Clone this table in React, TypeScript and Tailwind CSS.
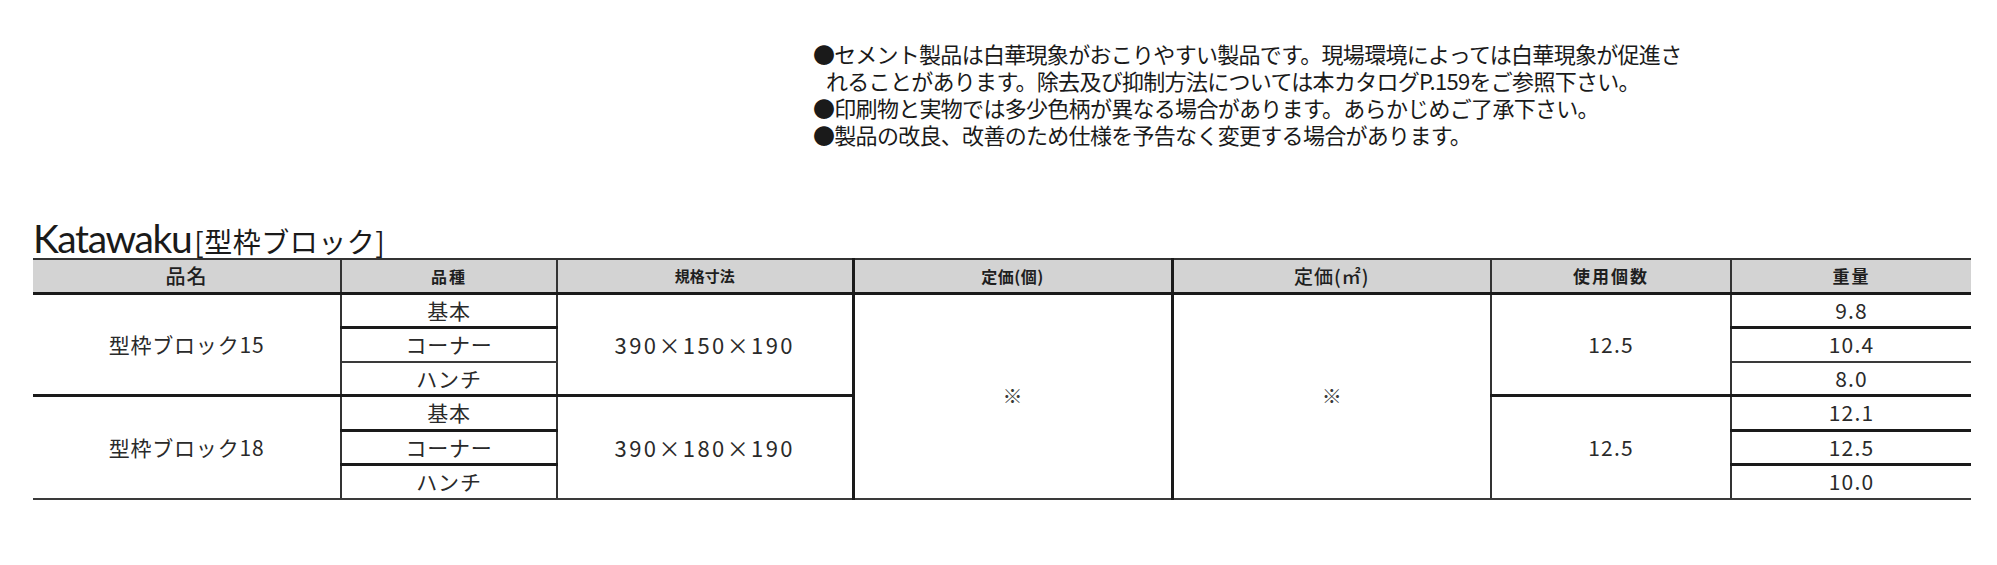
import React from "react";

const thinR = "border-r-2 border-r-[#333]";
const thickR = "border-r-[3px] border-r-[#1a1a1a]";
const thinB = "border-b-2 border-b-[#3a3a3a]";
const thickB = "border-b-[3px] border-b-[#1a1a1a]";
const cell = "p-0 text-center align-middle";
const bodyTxt = "text-[21px] tracking-[0.8px] text-[#2a2a2a]";
const numTxt = "text-[21px] tracking-[1.2px] text-[#2a2a2a]";

function Group({
  name,
  size,
  weights,
  first,
}: {
  name: string;
  size: string;
  weights: string[];
  first: boolean;
}) {
  const groupB = first ? thickB : thinB;
  const kinds = ["基本", "コーナー", "ハンチ"];
  const rowB = first ? [thickB, thinB, thickB] : [thickB, thickB, thinB];
  return (
    <>
      <tr className="h-[34px]">
        <td rowSpan={3} className={`${cell} ${thinR} ${groupB} ${bodyTxt}`}>
          {name}
        </td>
        <td className={`${cell} ${thinR} ${rowB[0]} ${bodyTxt}`}>{kinds[0]}</td>
        <td rowSpan={3} className={`${cell} ${thickR} ${groupB}`}>
          <span className="text-[22px] tracking-[2.4px] text-[#2a2a2a]">{size}</span>
        </td>
        {first && (
          <>
            <td rowSpan={6} className={`${cell} ${thickR} ${thinB} text-[20px] text-[#3a3a3a]`}>
              ※
            </td>
            <td rowSpan={6} className={`${cell} ${thinR} ${thinB} text-[20px] text-[#3a3a3a]`}>
              ※
            </td>
          </>
        )}
        <td rowSpan={3} className={`${cell} ${thinR} ${groupB} ${numTxt}`}>
          12.5
        </td>
        <td className={`${cell} ${rowB[0]} ${numTxt}`}>{weights[0]}</td>
      </tr>
      <tr className="h-[34px]">
        <td className={`${cell} ${thinR} ${rowB[1]} ${bodyTxt}`}>{kinds[1]}</td>
        <td className={`${cell} ${rowB[1]} ${numTxt}`}>{weights[1]}</td>
      </tr>
      <tr className="h-[34px]">
        <td className={`${cell} ${thinR} ${rowB[2]} ${bodyTxt}`}>{kinds[2]}</td>
        <td className={`${cell} ${rowB[2]} ${numTxt}`}>{weights[2]}</td>
      </tr>
    </>
  );
}

export default function App() {
  const head = `${cell} bg-[#d3d3d3] border-t-2 border-t-[#333] ${thickB} text-[#1f1f1f]`;
  return (
    <div className="w-[1997px] h-[565px] bg-white overflow-hidden font-['Noto_Sans_CJK_JP','Noto_Sans',sans-serif] text-[#1a1a1a]">
      <div className="ml-[813px] pt-[40px] text-[22px] leading-[27px] tracking-[-0.7px] whitespace-nowrap">
        <div>●セメント製品は白華現象がおこりやすい製品です。現場環境によっては白華現象が促進さ</div>
        <div className="pl-[13px]">れることがあります。除去及び抑制方法については本カタログP.159をご参照下さい。</div>
        <div>●印刷物と実物では多少色柄が異なる場合があります。あらかじめご了承下さい。</div>
        <div>●製品の改良、改善のため仕様を予告なく変更する場合があります。</div>
      </div>

      <div className="ml-[33px] mt-[70px] h-[40px] leading-[40px] flex items-baseline whitespace-nowrap text-[#1a1a1a]">
        <span className="font-['Lato','Liberation_Sans',sans-serif] text-[39px] tracking-[-1.4px]">Katawaku</span>
        <span className="ml-[3px] text-[28px] tracking-[0.5px]">[型枠ブロック]</span>
      </div>

      <table className="ml-[33px] border-collapse table-fixed w-[1938px]">
        <colgroup>
          <col className="w-[308px]" />
          <col className="w-[216px]" />
          <col className="w-[296px]" />
          <col className="w-[319px]" />
          <col className="w-[319px]" />
          <col className="w-[240px]" />
          <col className="w-[240px]" />
        </colgroup>
        <thead>
          <tr className="h-[34px]">
            <th className={`${head} ${thinR} text-[20px] font-medium tracking-[1px]`}>品名</th>
            <th className={`${head} ${thinR} text-[16px] font-bold tracking-[2px]`}>品種</th>
            <th className={`${head} ${thickR} text-[15px] font-bold`}>規格寸法</th>
            <th className={`${head} ${thickR} text-[16px] font-bold tracking-[0.5px]`}>定価(個)</th>
            <th className={`${head} ${thinR} text-[19px] font-medium tracking-[1px]`}>定価(㎡)</th>
            <th className={`${head} ${thinR} text-[17px] font-bold tracking-[2px]`}>使用個数</th>
            <th className={`${head} text-[17px] font-bold tracking-[2px]`}>重量</th>
          </tr>
        </thead>
        <tbody>
          <Group name="型枠ブロック15" size="390×150×190" weights={["9.8", "10.4", "8.0"]} first={true} />
          <Group name="型枠ブロック18" size="390×180×190" weights={["12.1", "12.5", "10.0"]} first={false} />
        </tbody>
      </table>
    </div>
  );
}
